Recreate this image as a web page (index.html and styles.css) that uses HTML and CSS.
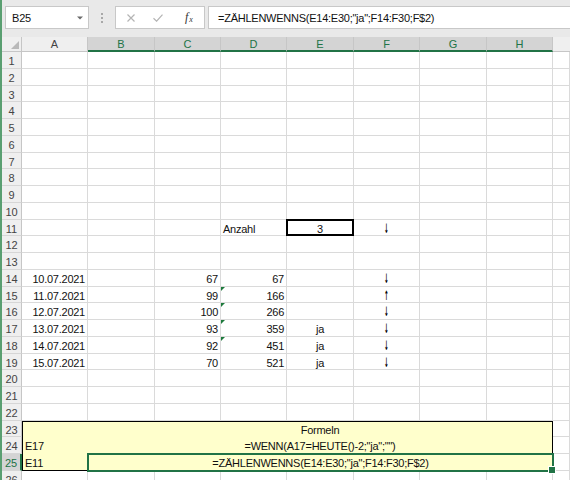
FILE: index.html
```html
<!DOCTYPE html>
<html lang="de">
<head>
<meta charset="utf-8">
<title>Excel</title>
<link rel="stylesheet" href="styles.css">
</head>
<body>
<div class="app">
  <div class="toolbar">
    <div class="namebox"><span>B25</span><svg class="dd" width="6" height="4" viewBox="0 0 6 4"><path d="M0 0.5H6L3 3.5Z" fill="#6a6a6a"/></svg></div>
    <div class="grip"><i></i><i></i><i></i></div>
    <div class="fxbtns">
      <svg class="xbtn" width="8" height="8" viewBox="0 0 8 8"><path d="M0.5 0.5L7.5 7.5M7.5 0.5L0.5 7.5" stroke="#b4b4b4" stroke-width="1.2" fill="none"/></svg>
      <svg class="okbtn" width="10" height="8" viewBox="0 0 10 8"><path d="M0.5 4.2L3.6 7.2L9.5 0.6" stroke="#b4b4b4" stroke-width="1.2" fill="none"/></svg>
      <span class="fx"><i>f</i><sub>x</sub></span>
    </div>
    <div class="formula">=ZÄHLENWENNS(E14:E30;"ja";F14:F30;F$2)</div>
  </div>
  <div class="sheet">
    <div class="corner"></div>
    <div class="ch">A</div><div class="ch sel">B</div><div class="ch sel">C</div><div class="ch sel">D</div><div class="ch sel">E</div><div class="ch sel">F</div><div class="ch sel">G</div><div class="ch sel">H</div><div class="ch last"></div>

    <div class="rh">1</div><div class="c"></div><div class="c"></div><div class="c"></div><div class="c"></div><div class="c"></div><div class="c"></div><div class="c"></div><div class="c"></div><div class="c"></div>
    <div class="rh">2</div><div class="c"></div><div class="c"></div><div class="c"></div><div class="c"></div><div class="c"></div><div class="c"></div><div class="c"></div><div class="c"></div><div class="c"></div>
    <div class="rh">3</div><div class="c"></div><div class="c"></div><div class="c"></div><div class="c"></div><div class="c"></div><div class="c"></div><div class="c"></div><div class="c"></div><div class="c"></div>
    <div class="rh">4</div><div class="c"></div><div class="c"></div><div class="c"></div><div class="c"></div><div class="c"></div><div class="c"></div><div class="c"></div><div class="c"></div><div class="c"></div>
    <div class="rh">5</div><div class="c"></div><div class="c"></div><div class="c"></div><div class="c"></div><div class="c"></div><div class="c"></div><div class="c"></div><div class="c"></div><div class="c"></div>
    <div class="rh">6</div><div class="c"></div><div class="c"></div><div class="c"></div><div class="c"></div><div class="c"></div><div class="c"></div><div class="c"></div><div class="c"></div><div class="c"></div>
    <div class="rh">7</div><div class="c"></div><div class="c"></div><div class="c"></div><div class="c"></div><div class="c"></div><div class="c"></div><div class="c"></div><div class="c"></div><div class="c"></div>
    <div class="rh">8</div><div class="c"></div><div class="c"></div><div class="c"></div><div class="c"></div><div class="c"></div><div class="c"></div><div class="c"></div><div class="c"></div><div class="c"></div>
    <div class="rh">9</div><div class="c"></div><div class="c"></div><div class="c"></div><div class="c"></div><div class="c"></div><div class="c"></div><div class="c"></div><div class="c"></div><div class="c"></div>
    <div class="rh">10</div><div class="c"></div><div class="c"></div><div class="c"></div><div class="c"></div><div class="c"></div><div class="c"></div><div class="c"></div><div class="c"></div><div class="c"></div>
    <div class="rh">11</div><div class="c"></div><div class="c"></div><div class="c"></div><div class="c">Anzahl</div><div class="c m box">3</div><div class="c m"><span class="arr">↓</span></div><div class="c"></div><div class="c"></div><div class="c"></div>
    <div class="rh">12</div><div class="c"></div><div class="c"></div><div class="c"></div><div class="c"></div><div class="c"></div><div class="c"></div><div class="c"></div><div class="c"></div><div class="c"></div>
    <div class="rh">13</div><div class="c"></div><div class="c"></div><div class="c"></div><div class="c"></div><div class="c"></div><div class="c"></div><div class="c"></div><div class="c"></div><div class="c"></div>
    <div class="rh">14</div><div class="c r">10.07.2021</div><div class="c"></div><div class="c r">67</div><div class="c r">67</div><div class="c"></div><div class="c m"><span class="arr">↓</span></div><div class="c"></div><div class="c"></div><div class="c"></div>
    <div class="rh">15</div><div class="c r">11.07.2021</div><div class="c"></div><div class="c r">99</div><div class="c r tri">166</div><div class="c"></div><div class="c m"><span class="arr">↑</span></div><div class="c"></div><div class="c"></div><div class="c"></div>
    <div class="rh">16</div><div class="c r">12.07.2021</div><div class="c"></div><div class="c r">100</div><div class="c r tri">266</div><div class="c"></div><div class="c m"><span class="arr">↓</span></div><div class="c"></div><div class="c"></div><div class="c"></div>
    <div class="rh">17</div><div class="c r">13.07.2021</div><div class="c"></div><div class="c r">93</div><div class="c r tri">359</div><div class="c m">ja</div><div class="c m"><span class="arr">↓</span></div><div class="c"></div><div class="c"></div><div class="c"></div>
    <div class="rh">18</div><div class="c r">14.07.2021</div><div class="c"></div><div class="c r">92</div><div class="c r tri">451</div><div class="c m">ja</div><div class="c m"><span class="arr">↓</span></div><div class="c"></div><div class="c"></div><div class="c"></div>
    <div class="rh">19</div><div class="c r">15.07.2021</div><div class="c"></div><div class="c r">70</div><div class="c r">521</div><div class="c m">ja</div><div class="c m"><span class="arr">↓</span></div><div class="c"></div><div class="c"></div><div class="c"></div>
    <div class="rh">20</div><div class="c"></div><div class="c"></div><div class="c"></div><div class="c"></div><div class="c"></div><div class="c"></div><div class="c"></div><div class="c"></div><div class="c"></div>
    <div class="rh">21</div><div class="c"></div><div class="c"></div><div class="c"></div><div class="c"></div><div class="c"></div><div class="c"></div><div class="c"></div><div class="c"></div><div class="c"></div>
    <div class="rh">22</div><div class="c"></div><div class="c"></div><div class="c"></div><div class="c"></div><div class="c"></div><div class="c"></div><div class="c"></div><div class="c"></div><div class="c"></div>
    <div class="rh">23</div><div class="c"></div>
    <div class="rh">24</div><div class="c"></div>
    <div class="rh sel">25</div><div class="c"></div>
    <div class="rh">26</div><div class="c"></div><div class="c"></div><div class="c"></div><div class="c"></div><div class="c"></div><div class="c"></div><div class="c"></div><div class="c"></div><div class="c"></div>

    <div class="block">
      <div></div><div class="bc m">Formeln</div>
      <div class="bc pt">E17</div><div class="bc m pt">=WENN(A17=HEUTE()-2;"ja";"")</div>
      <div class="bc pt">E11</div><div></div>
    </div>
    <div class="selbox">=ZÄHLENWENNS(E14:E30;"ja";F14:F30;F$2)</div>
  </div>
</div>
</body>
</html>
```

FILE: styles.css
```css
* { box-sizing: border-box; }
html, body { margin: 0; height: 100%; overflow: hidden; background: #fff; }
body {
  font-family: "Liberation Sans", Arial, sans-serif;
  font-size: 11px;
  color: #111;
}
.app {
  height: 480px;
  display: flex;
  flex-direction: column;
  border-left: 2px solid #5a9f71;
}
.toolbar {
  flex: none;
  height: 37px;
  background: #e9e9e9;
  display: flex;
  align-items: flex-start;
  padding: 6px 0 0 3px;
}
.namebox {
  width: 84px;
  height: 23px;
  background: #fff;
  border: 1px solid #c8c8c8;
  display: flex;
  align-items: center;
  justify-content: space-between;
  padding: 0 5px 0 6px;
  letter-spacing: -0.2px;
}
.dd { margin-top: 1px; }
.grip {
  width: 26px;
  height: 23px;
  display: flex;
  flex-direction: column;
  align-items: center;
  gap: 2px;
  padding-top: 7px;
}
.grip i {
  display: block;
  width: 2px;
  height: 2px;
  background: #a8a8a8;
}
.fxbtns {
  width: 90px;
  height: 23px;
  background: #fff;
  border: 1px solid #c8c8c8;
  display: flex;
  align-items: center;
  padding-left: 11px;
}
.okbtn { margin-left: 18px; }
.fx {
  margin-left: 22px;
  font-family: "Liberation Serif", "Times New Roman", serif;
  font-size: 12px;
  color: #333;
  letter-spacing: 0;
}
.fx i { font-style: italic; }
.fx sub { font-size: 8px; font-style: italic; vertical-align: -1px; margin-left: 1px; }
.formula {
  flex: 1;
  height: 23px;
  margin-left: 3px;
  background: #fff;
  border: 1px solid #c8c8c8;
  border-right: none;
  padding-left: 9px;
  display: flex;
  align-items: center;
  letter-spacing: -0.25px;
  white-space: nowrap;
}
.sheet {
  flex: 1;
  overflow: hidden;
  display: grid;
  grid-template-columns: 20px 66px 67px 66px 66px 67px 66px 67px 66px 1fr;
  grid-template-rows: 15px;
  grid-auto-rows: 16.75px;
}
.corner {
  position: relative;
  background: #efefef;
  border-right: 1px solid #c6c6c6;
  border-bottom: 1px solid #c6c6c6;
}
.corner::after {
  content: "";
  position: absolute;
  right: 2px;
  bottom: 2px;
  border-left: 8px solid transparent;
  border-bottom: 8px solid #b9b9b9;
}
.ch {
  background: #efefef;
  border-right: 1px solid #c6c6c6;
  border-bottom: 1px solid #c6c6c6;
  text-align: center;
  line-height: 14px;
  color: #444;
}
.ch.sel {
  background: #d4d4d4;
  color: #217346;
  border-bottom: 2px solid #217346;
}
.ch.last { border-right: none; }
.rh {
  background: #efefef;
  border-right: 1px solid #c6c6c6;
  border-bottom: 1px solid #d6d6d6;
  text-align: center;
  line-height: 16px;
  padding-top: 1px;
  color: #444;
}
.rh.sel {
  background: #d4d4d4;
  color: #217346;
  border-right: 2px solid #217346;
}
.c {
  border-right: 1px solid #dadada;
  border-bottom: 1px solid #dadada;
  line-height: 16px;
  padding: 1px 2px 0;
  white-space: nowrap;
  letter-spacing: -0.25px;
}
.r { text-align: right; }
.m { text-align: center; }
.arr {
  display: inline-block;
  font-family: "DejaVu Sans", sans-serif;
  font-size: 13px;
  font-weight: bold;
  line-height: 14px;
  color: #000;
  transform: scaleX(0.4);
  letter-spacing: 0;
}
.box { position: relative; }
.box::after {
  content: "";
  position: absolute;
  left: -1px;
  top: -1px;
  right: -1px;
  bottom: -1px;
  border: 2px solid #000;
}
.tri { position: relative; }
.tri::before {
  content: "";
  position: absolute;
  left: 0;
  top: 0;
  border-top: 4px solid #1d7a3c;
  border-right: 4px solid transparent;
}
.block {
  grid-column: 2 / 10;
  grid-row: 24 / 27;
  background: #ffffcc;
  border: 1px solid #000;
  display: grid;
  grid-template-columns: 65px 1fr;
  grid-template-rows: 15.75px 16.75px 15.75px;
}
.bc {
  line-height: 16px;
  padding: 0 2px;
  white-space: nowrap;
  letter-spacing: -0.25px;
}
.bc.pt { padding-top: 1px; }
.selbox {
  grid-column: 3 / 10;
  grid-row: 26 / 27;
  margin: -1px;
  position: relative;
  z-index: 2;
  border: 2px solid #217346;
  text-align: center;
  line-height: 16px;
  letter-spacing: -0.25px;
  white-space: nowrap;
}
.selbox::after {
  content: "";
  position: absolute;
  right: -4px;
  bottom: -4px;
  width: 6px;
  height: 6px;
  background: #217346;
  border: 1px solid #fff;
}
```
